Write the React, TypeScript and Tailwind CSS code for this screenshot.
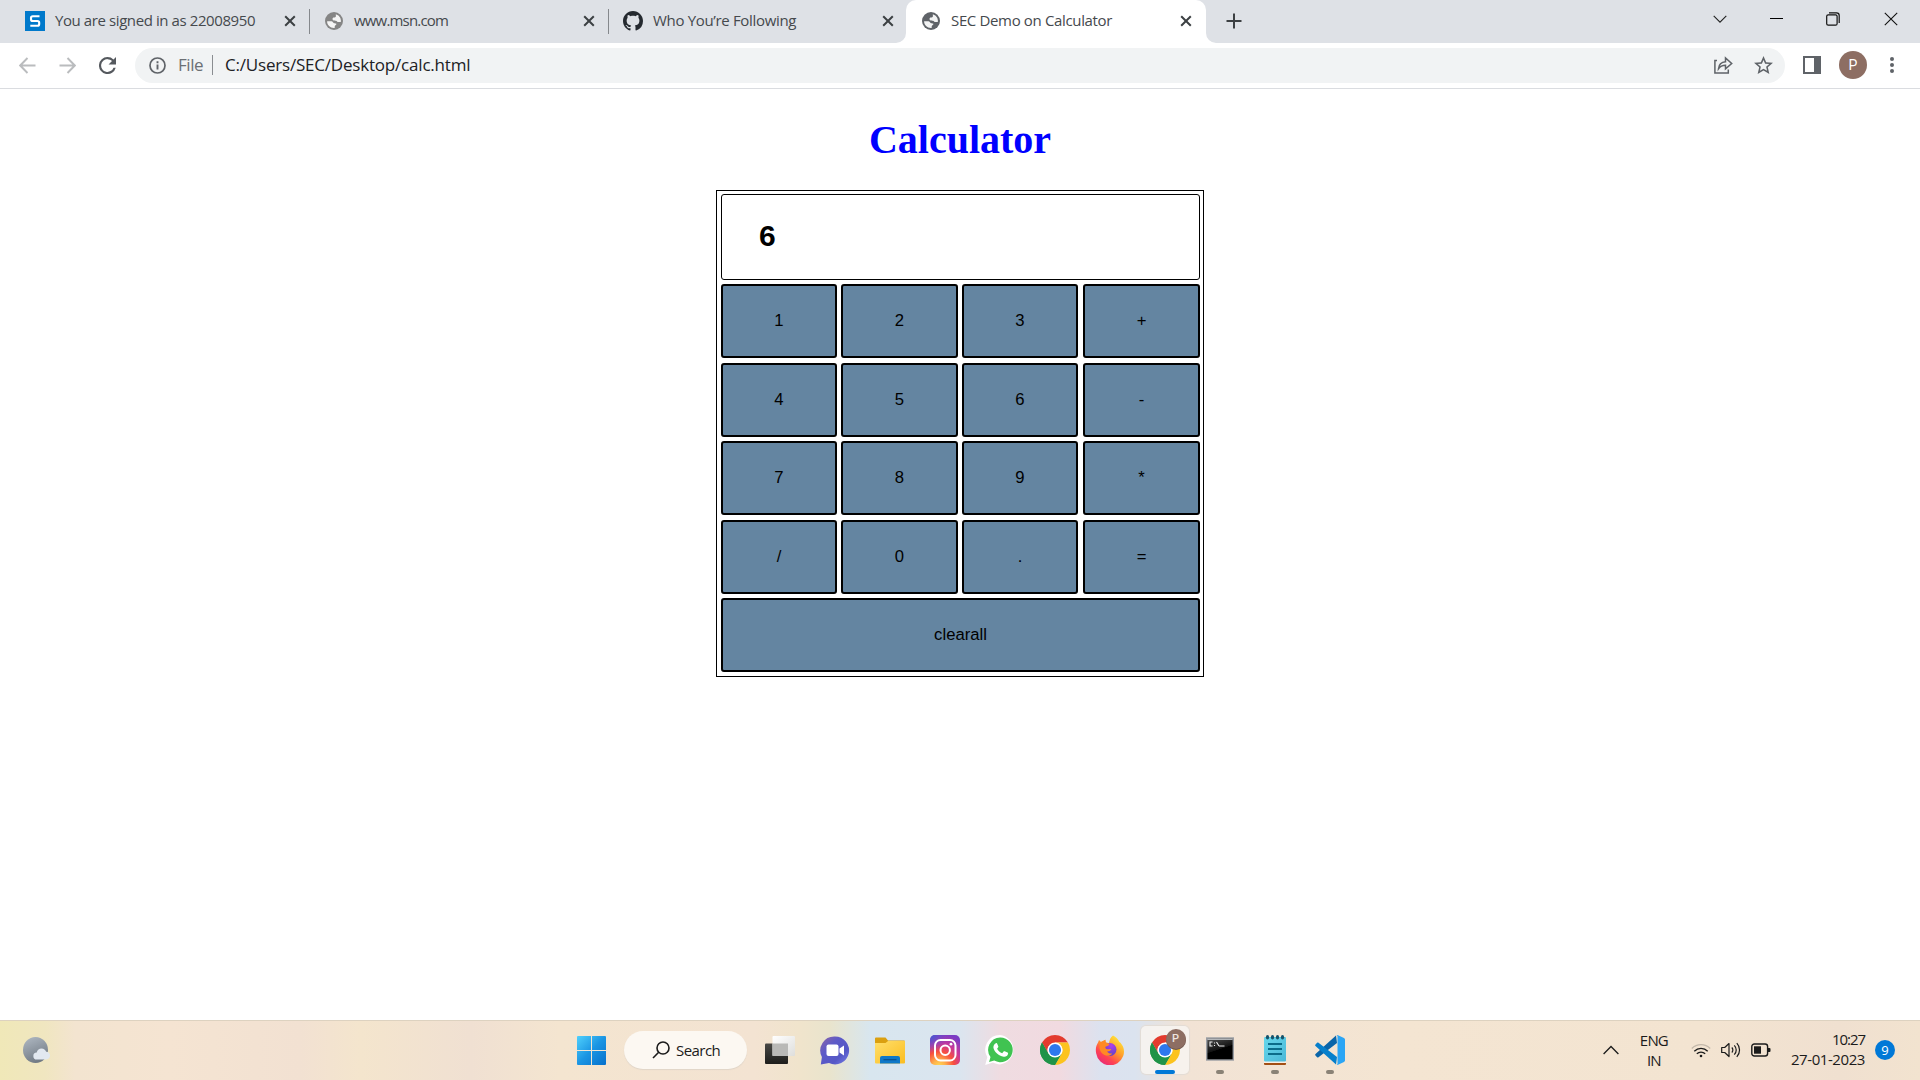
import type { ReactNode } from 'react';

const ui = 'font-["Open_Sans",sans-serif]';

function Globe({ className }: { className: string }) {
  return (
    <svg viewBox="0 0 18 18" className={`size-[18px] shrink-0 ${className}`}>
      <circle cx="9" cy="9" r="9" fill="currentColor" />
      <path
        d="M10.8 2.2c2.9.8 5.1 3.4 5.1 6.6 0 .5 0 .9-.2 1.3h-2.3c-1.2 0-1.5-1-2.4-1.3-.8-.3-2 .1-2.9-.5-.9-.6-.7-2.2.3-2.7.7-.3 1.700.200 2.200-.5.5-.7.2-1.900.200-2.900z"
        fill="#fff"
        opacity=".92"
      />
      <path
        d="M2.100 9.200h4.300c1.500 0 1.700 1.800 2.600 2 .9.200 2.200-.1 2.400.8.200 1-1.300 1.200-1.600 1.900-.2.600-.1 1.300-.1 2-4.200.4-7.600-2.600-7.600-6.700z"
        fill="#fff"
        opacity=".92"
      />
    </svg>
  );
}

function GitHub() {
  return (
    <svg viewBox="0 0 16 16" className="size-5 shrink-0" fill="#24292f">
      <path d="M8 0C3.58 0 0 3.58 0 8c0 3.54 2.29 6.53 5.47 7.59.4.07.55-.17.55-.38 0-.19-.01-.82-.01-1.49-2.01.37-2.53-.49-2.69-.94-.09-.23-.48-.94-.82-1.13-.28-.15-.68-.52-.01-.53.63-.01 1.08.58 1.23.82.72 1.21 1.87.87 2.33.66.07-.52.28-.87.51-1.07-1.78-.2-3.64-.89-3.64-3.95 0-.87.31-1.59.82-2.15-.08-.2-.36-1.02.08-2.12 0 0 .67-.21 2.2.82.64-.18 1.32-.27 2-.27s1.36.09 2 .27c1.53-1.04 2.2-.82 2.2-.82.44 1.1.16 1.92.08 2.12.51.56.82 1.27.82 2.15 0 3.07-1.87 3.75-3.65 3.95.29.25.54.73.54 1.48 0 1.07-.01 1.93-.01 2.2 0 .21.15.46.55.38A8.01 8.01 0 0 0 16 8c0-4.42-3.58-8-8-8z" />
    </svg>
  );
}

function TabClose() {
  return (
    <svg viewBox="0 0 12 12" className="ml-auto size-3 shrink-0" stroke="#3c4043" strokeWidth="2">
      <path d="M1.200 1.200l9.600 9.600M10.800 1.200L1.200 10.800" />
    </svg>
  );
}

function TabStrip() {
  return (
    <div className="flex h-[43px] bg-[#dee1e6] text-[15px] text-[#45494d]">
      <div className="flex h-[42px] w-[309px] items-center pr-[13px] pl-[25px]">
        <svg viewBox="0 0 20 20" className="size-5 shrink-0">
          <path d="M0 0h20v20H0z" fill="#0079cb" />
          <path d="M14.500 5.200H7.800Q6 5.200 6 7v1.200Q6 10 7.800 10h4.600q1.800 0 1.800 1.800v1.200q0 1.800-1.800 1.800H5.300" fill="none" stroke="#fff" strokeWidth="2.100" />
        </svg>
        <span className="ml-[10px] pb-[2px] tracking-[-0.41px] whitespace-nowrap">You are signed in as 22008950</span>
        <TabClose />
      </div>
      <div className="mt-[9px] h-[25px] w-px bg-[#85888c]" />
      <div className="flex h-[42px] w-[298px] items-center pr-[13px] pl-[15px]">
        <Globe className="text-[#858585]" />
        <span className="ml-[11px] pb-[2px] tracking-[-0.82px] whitespace-nowrap">www.msn.com</span>
        <TabClose />
      </div>
      <div className="mt-[9px] h-[25px] w-px bg-[#85888c]" />
      <div className="flex h-[42px] w-[297px] items-center pr-[12px] pl-[14px]">
        <GitHub />
        <span className="ml-[10px] pb-[2px] tracking-[-0.33px] whitespace-nowrap">Who You’re Following</span>
        <TabClose />
      </div>
      <div className="relative flex h-[43px] w-[300px] items-center rounded-t-[10px] bg-white pr-[14px] pb-px pl-4">
        <svg viewBox="0 0 10 10" className="absolute bottom-0 -left-[10px] size-[10px]" fill="#fff">
          <path d="M10 0v10H0A10 10 0 0 0 10 0z" />
        </svg>
        <svg viewBox="0 0 10 10" className="absolute -right-[10px] bottom-0 size-[10px]" fill="#fff">
          <path d="M0 0v10h10A10 10 0 0 1 0 0z" />
        </svg>
        <Globe className="text-[#5f6368]" />
        <span className="ml-[11px] pb-[2px] tracking-[-0.35px] whitespace-nowrap">SEC Demo on Calculator</span>
        <TabClose />
      </div>
      <svg viewBox="0 0 16 16" className="mt-[13px] ml-5 size-4" stroke="#3c4043" strokeWidth="2">
        <path d="M8 .5v15M.5 8h15" />
      </svg>
      <div className="ml-auto flex h-[37px] items-center pr-[22px] text-black">
        <svg viewBox="0 0 14 14" className="mr-[43px] size-[14px]" fill="none" stroke="#222" strokeWidth="1.100">
          <path d="M.7 3.800L7 10.100l6.300-6.300" />
        </svg>
        <div className="mr-[43px] h-px w-[13px] bg-black" />
        <svg viewBox="0 0 14 14" className="mr-11 size-[14px]" fill="none" stroke="#111" strokeWidth="1.200">
          <rect x=".7" y="2.800" width="10.400" height="10.400" rx="1.500" />
          <path d="M3 .8h7.500a2.700 2.700 0 0 1 2.700 2.700V11" />
        </svg>
        <svg viewBox="0 0 14 14" className="size-[14px]" stroke="#111" strokeWidth="1.100">
          <path d="M.8.8l12.400 12.400M13.200.8L.8 13.200" />
        </svg>
      </div>
    </div>
  );
}

function Toolbar() {
  return (
    <div className="flex h-[46px] items-center border-b border-[#dadce0] bg-white pb-px pl-[19px]">
      <svg viewBox="0 0 17 17" className="size-[17px]" fill="none" stroke="#babcbe" strokeWidth="1.900">
        <path d="M16.500 8.500H1.500M8.500 1L1.200 8.500l7.300 7.500" />
      </svg>
      <svg viewBox="0 0 17 17" className="ml-[23px] size-[17px]" fill="none" stroke="#babcbe" strokeWidth="1.900">
        <path d="M.5 8.500h15M8.500 1l7.300 7.500L8.500 16" />
      </svg>
      <svg viewBox="4 4 16 16" className="ml-[23px] size-[17px]" fill="#55595e">
        <path d="M17.650 6.350A7.958 7.958 0 0 0 12 4a8 8 0 1 0 7.730 10h-2.080A6 6 0 1 1 12 6c1.660 0 3.140.690 4.220 1.780L13 11h7V4l-2.350 2.350z" />
      </svg>
      <div className="ml-[19px] flex h-[35px] w-[1650px] items-center rounded-full bg-[#f1f3f4] pr-[12px] pl-[14px] text-[17px]">
        <svg viewBox="0 0 17 17" className="size-[17px]" fill="none" stroke="#5f6368" strokeWidth="1.700">
          <circle cx="8.500" cy="8.500" r="7.500" />
          <path d="M8.500 7.500v5M8.500 4.300v1.900" strokeWidth="1.900" />
        </svg>
        <span className="ml-3 tracking-[-0.47px] text-[#6b6f74]">File</span>
        <div className="ml-[9px] h-5 w-px bg-[#8a8d91]" />
        <span className="ml-[12px] tracking-[-0.2px] text-[#202124]">C:/Users/SEC/Desktop/calc.html</span>
        <svg viewBox="0 0 19 18" className="mr-[21px] ml-auto h-[18px] w-[19px]" fill="none" stroke="#5f6368" strokeWidth="1.500">
          <path d="M3 4.500H.9v12.600h13.400v-3.500" />
          <path d="M4.500 12.700c.4-4.400 2.900-6.600 7-6.900V2l6.200 5.500-6.200 5.300V9.300c-3.200 0-5.300 1-7 3.400z" />
        </svg>
        <svg viewBox="2 2 20 19" className="h-[18px] w-[19px]" fill="#5f6368">
          <path d="M22 9.240l-7.190-.62L12 2 9.190 8.630 2 9.240l5.460 4.730L5.820 21 12 17.270 18.180 21l-1.630-7.030L22 9.240zM12 15.400l-3.760 2.270 1-4.280-3.320-2.880 4.380-.38L12 6.100l1.710 4.040 4.380.380-3.320 2.880 1 4.280L12 15.400z" />
        </svg>
      </div>
      <div className="ml-[18px] h-[18px] w-[18px] border-2 border-r-[7px] border-[#5f6368]" />
      <div className='ml-[18px] flex size-7 items-center justify-center rounded-full bg-[#8d6e63] font-["Roboto",sans-serif] text-[14px] text-white'>P</div>
      <div className="ml-[23px] flex flex-col gap-[2px]">
        <div className="size-1 rounded-full bg-[#5f6368]" />
        <div className="size-1 rounded-full bg-[#5f6368]" />
        <div className="size-1 rounded-full bg-[#5f6368]" />
      </div>
    </div>
  );
}

const keyRows = [
  ['1', '2', '3', '+'],
  ['4', '5', '6', '-'],
  ['7', '8', '9', '*'],
  ['/', '0', '.', '='],
];
const rowGap = ['mt-[4px]', 'mt-[5px]', 'mt-[4px]', 'mt-[5px]'];
const keySize = ['w-[116px]', 'ml-[4px] w-[117px]', 'ml-[4px] w-[116px]', 'ml-[5px] w-[117px]'];

function Key({ className, children }: { className: string; children: ReactNode }) {
  return (
    <button className={`h-[74px] rounded-[3px] border-2 border-black bg-[#6485a1] leading-5 ${className}`}>
      {children}
    </button>
  );
}

function Calculator() {
  return (
    <main className="flex flex-1 flex-col items-center">
      <h1 className='mt-[28px] h-[46px] font-["Liberation_Serif",serif] text-[40px] leading-[46px] font-bold text-[#0000ff]'>
        Calculator
      </h1>
      <div className='mt-[27px] h-[487px] w-[488px] border border-black py-[3px] pr-[3px] pl-1 font-["Liberation_Sans",sans-serif] text-[16.67px] text-black'>
        <div className="flex h-[86px] items-center rounded-[3px] border border-black pb-[3px] pl-[37px] text-[30px] font-bold">6</div>
        {keyRows.map((row, r) => (
          <div key={r} className={`flex ${rowGap[r]}`}>
            {row.map((k, c) => (
              <Key key={k} className={keySize[c]}>{k}</Key>
            ))}
          </div>
        ))}
        <Key className="mt-[4px] w-[479px]">clearall</Key>
      </div>
    </main>
  );
}

function Slot({ children, running, active }: { children: ReactNode; running?: boolean; active?: boolean }) {
  return (
    <div className="flex w-[55px] justify-center">
      <div className={`relative flex size-12 items-center justify-center rounded-[5px] ${active ? 'bg-[#f7f3ef]/90 shadow-[0_0_1px_1px_#e3dcd5]' : ''}`}>
        {children}
        {running && <div className="absolute bottom-0 h-1 w-2 rounded-full bg-[#8a8276]" />}
        {active && <div className="absolute bottom-0 h-1 w-5 rounded-full bg-[#0078d7]" />}
      </div>
    </div>
  );
}

function WindowsLogo() {
  return (
    <svg viewBox="0 0 29 29" className="size-[29px]">
      <defs>
        <linearGradient id="win" x1="0" y1="0" x2="29" y2="29" gradientUnits="userSpaceOnUse">
          <stop stopColor="#4fd0fc" />
          <stop offset=".5" stopColor="#1b95e3" />
          <stop offset="1" stopColor="#0670cc" />
        </linearGradient>
      </defs>
      <path fill="url(#win)" d="M1 0h13v14H0V1q0-1 1-1zM15 0h13q1 0 1 1v13H15zM0 15h14v14H1q-1 0-1-1zM15 15h14v13q0 1-1 1H15z" />
    </svg>
  );
}

function TaskView() {
  return (
    <svg viewBox="0 0 30 28" className="h-7 w-[30px]">
      <defs>
        <linearGradient id="tvb" x1="0" y1="0" x2="0" y2="1"><stop stopColor="#484845" /><stop offset="1" stopColor="#1d1d1b" /></linearGradient>
        <linearGradient id="tvf" x1="0" y1="0" x2="1" y2="1"><stop stopColor="#fff" /><stop offset="1" stopColor="#dededc" /></linearGradient>
      </defs>
      <rect y="7.500" width="23" height="20.500" rx="1" fill="url(#tvb)" />
      <rect x="7.500" width="22.500" height="20" rx="1" fill="url(#tvf)" />
      <path d="M7.500 7.500H23V20H7.500z" fill="#b9b9b7" />
    </svg>
  );
}

function Chat() {
  return (
    <svg viewBox="0 0 30 29" className="h-[29px] w-[30px]">
      <defs>
        <linearGradient id="chat" x1="0" y1="0" x2="1" y2="1"><stop stopColor="#8e66a4" /><stop offset=".35" stopColor="#5d5ac8" /><stop offset=".7" stopColor="#5558c6" /><stop offset="1" stopColor="#7b83eb" /></linearGradient>
      </defs>
      <path d="M15 .5a14 14 0 1 1-6 26.600L.8 28.500 1.900 21A14 14 0 0 1 15 .5z" fill="url(#chat)" />
      <rect x="6.500" y="8.500" width="12" height="11.500" rx="2" fill="#fff" />
      <path d="M19.500 12.500l4.500-3v10l-4.500-3z" fill="#fff" />
    </svg>
  );
}

function Explorer() {
  return (
    <svg viewBox="0 0 30 27" className="h-[27px] w-[30px]">
      <defs>
        <linearGradient id="fold" x1="0" y1="0" x2="1" y2="1"><stop stopColor="#ffdf6b" /><stop offset="1" stopColor="#fbbd20" /></linearGradient>
      </defs>
      <path d="M0 1.500Q0 .5 1 .5h9.500l2.500 3h16q1 0 1 1V9H0z" fill="#dba010" />
      <path d="M0 6h10.500l2.500-2h17v21.500q0 1-1 1H1q-1 0-1-1z" fill="url(#fold)" />
      <path d="M5 26.500V21q0-2 2-2h16q2 0 2 2v5.500z" fill="#0f78c8" />
      <path d="M8.500 22.700h13" stroke="#0a4f8c" strokeWidth="1.200" />
    </svg>
  );
}

function Instagram() {
  return (
    <svg viewBox="0 0 30 30" className="size-[30px]">
      <defs>
        <radialGradient id="ig" cx=".3" cy="1.050" r="1.100">
          <stop stopColor="#ffdc55" /><stop offset=".2" stopColor="#ffb04a" /><stop offset=".45" stopColor="#f8503d" /><stop offset=".7" stopColor="#c8379b" /><stop offset="1" stopColor="#7a3bc4" />
        </radialGradient>
        <radialGradient id="ig2" cx="0" cy="0" r=".6"><stop stopColor="#3f5bd0" /><stop offset="1" stopColor="#5851db" stopOpacity="0" /></radialGradient>
      </defs>
      <rect width="30" height="30" rx="5" fill="url(#ig)" />
      <rect width="30" height="30" rx="5" fill="url(#ig2)" />
      <g fill="none" stroke="#fff" strokeWidth="2">
        <rect x="5" y="5" width="20.500" height="20.500" rx="5.500" />
        <circle cx="15.200" cy="15.200" r="4.700" />
      </g>
      <circle cx="21" cy="9.200" r="1.400" fill="#fff" />
    </svg>
  );
}

function WhatsApp() {
  return (
    <svg viewBox="0 0 30 30" className="size-[30px]">
      <path d="M15 0a15 14.800 0 0 1 0 29.400c-2.500 0-4.900-.6-7-1.800L.2 29.900l2.100-7.700A14.700 14.700 0 0 1 15 0z" fill="#fff" />
      <path d="M15.200 2.400a12.400 12.400 0 1 1-6 23.200l-5.100 1.300 1.400-4.900a12.400 12.400 0 0 1 9.700-19.600z" fill="#40c351" />
      <path d="M10.800 8.200c.8-.3 1.200-.1 1.500.7l1 2.400c.2.500 0 .9-.3 1.300l-.9 1.100c1.200 2.200 2.800 3.500 5.100 4.500l1.400-1.700c.3-.4.700-.4 1.100-.2l2.800 1.300c.7.300.7.700.5 1.500-.5 2-2.300 3-4.300 2.700-5.300-.9-9.800-5.200-10.300-9.300-.1-1.800.9-3.700 2.400-4.300z" fill="#fff" />
    </svg>
  );
}

function Chrome() {
  return (
    <svg viewBox="0 0 48 48" className="size-[30px]">
      <path d="M24 24L3.220 12A24 24 0 0 1 44.780 12L24 12z" fill="#e33b2e" />
      <path d="M3.220 12A24 24 0 0 0 24 48l10.400-18L24 24l-10.400 6z" fill="#1f9348" />
      <path d="M44.780 12A24 24 0 0 1 24 48l10.400-18A12 12 0 0 0 24 12z" fill="#fcc31e" />
      <path d="M3.220 12l10.400 18A12 12 0 0 1 24 12z" fill="#e33b2e" />
      <path d="M3.220 12A24 24 0 0 0 24 48l10.400-18a12 12 0 0 1-20.800 0z" fill="#1f9348" />
      <circle cx="24" cy="24" r="12" fill="#fff" />
      <circle cx="24" cy="24" r="9.700" fill="#2e78ed" />
    </svg>
  );
}

function Firefox() {
  return (
    <svg viewBox="0 0 30 30" className="size-[30px]">
      <defs>
        <linearGradient id="ffo" x1=".85" y1=".1" x2=".2" y2="1"><stop stopColor="#ffe53a" /><stop offset=".4" stopColor="#ff9a2a" /><stop offset=".7" stopColor="#ff4351" /><stop offset="1" stopColor="#e5267e" /></linearGradient>
        <radialGradient id="ffp" cx=".6" cy=".2" r=".9"><stop stopColor="#b23fe8" /><stop offset="1" stopColor="#5044c4" /></radialGradient>
      </defs>
      <path d="M18 .5c3 1.200 5.300 3.800 6.200 6.300 1.200.7 2 1.600 2.500 2.800 2.500 3 2.900 7.900 1.500 11.500A14 14 0 0 1 1.200 18.500C.2 13.700 1.300 10 3.200 7.200L4 5l2 2 4.500-2.300c-.3 1.300 0 2.200.5 2.800 1.200.1 2.100.2 3 .6.400-3 1.500-5.800 4-7.600z" fill="url(#ffo)" />
      <circle cx="15" cy="14.500" r="6.500" fill="url(#ffp)" />
      <path d="M3.200 8L6 7l4.500-2.300c-.2 1.400.2 2.300.8 3L14.500 9c-.3 1.800-2.300 2-3.700 2.500-.9.800-.4 2.300 1.200 2.700 1.600.4 3-.6 4.200.1-.8 1.800-2.500 2.300-4.200 2.200 1 1.600 3.200 2.500 5.300 1.900-2 2.800-6.500 3.100-9.300.7C4.500 16.300 4 12 5 10z" fill="#ff8a24" />
    </svg>
  );
}

function Terminal() {
  return (
    <svg viewBox="0 0 28 24" className="mb-[3px] h-6 w-7">
      <defs>
        <linearGradient id="cmd" x1="0" y1="0" x2=".4" y2="1"><stop stopColor="#555" /><stop offset=".6" stopColor="#111" /><stop offset=".61" stopColor="#000" /></linearGradient>
      </defs>
      <rect x=".7" y="1" width="26.600" height="22" fill="url(#cmd)" stroke="#9a9da3" strokeWidth="1.400" />
      <path d="M1.400 2.300h25.200" stroke="#d3d6da" />
      <path d="M6.500 5H4v4h2.500M8.500 5.500v1M8.500 8v1M10.500 5l2.500 4M13 9h5.500" fill="none" stroke="#eee" strokeWidth="1.100" />
    </svg>
  );
}

function Notepad() {
  return (
    <svg viewBox="0 0 22 30" className="h-[30px] w-[22px]">
      <defs>
        <linearGradient id="note" x1="0" y1="0" x2="1" y2="1"><stop stopColor="#68d8ec" /><stop offset="1" stopColor="#4bb8d8" /></linearGradient>
      </defs>
      <rect y="24" width="22" height="6" rx="1" fill="#a34f14" />
      <rect y="24" width="22" height="4" fill="#f5f0e8" />
      <rect y="2" width="22" height="24.500" rx="1" fill="url(#note)" />
      <path d="M4 9h14M4 14h14M4 19h14" stroke="#0b6c8a" strokeWidth="1.800" />
      <g fill="#15526a">
        <ellipse cx="3.500" cy="2.200" rx="1.600" ry="2.200" /><ellipse cx="8.500" cy="2.200" rx="1.600" ry="2.200" /><ellipse cx="13.500" cy="2.200" rx="1.600" ry="2.200" /><ellipse cx="18.500" cy="2.200" rx="1.600" ry="2.200" />
      </g>
    </svg>
  );
}

function VSCode() {
  return (
    <svg viewBox="0 0 30 30" className="size-[30px]">
      <path d="M22 8L3.500 22.200c-.5.400-1 .3-1.400 0L.5 20.600c-.5-.5-.5-1.200 0-1.700L21 .5z" fill="#0a65a9" />
      <path d="M22 22L3.500 7.800c-.5-.4-1-.3-1.400 0L.5 9.400c-.5.500-.5 1.200 0 1.700L21 29.500z" fill="#077fcb" />
      <path d="M21.500.3c.5-.3 1-.3 1.500 0l6 2.800c.6.300 1 .9 1 1.500v20.800c0 .6-.4 1.200-1 1.500l-6 2.800c-.5.300-1 .3-1.500 0 .5.300 1-.2 1-1V1.300c0-.8-.5-1.300-1-1z" fill="#2aa5f5" />
    </svg>
  );
}

function Taskbar() {
  return (
    <footer className="flex h-[60px] items-center border-t border-[#ddd2c0] bg-[linear-gradient(90deg,#f0e8b8_0,#f0e6c0_45px,#f3e4d0_75px,#f5e4d2_170px,#f2e1d2_300px,#f4e5cd_360px,#f0e0d2_470px,#f4e5d0_560px,#f3e3d2_755px,#f0e4cc_800px,#e9e4cd_830px,#d8e6ef_870px,#dbe5ef_960px,#efdce1_1000px,#f1dae0_1060px,#dce2ef_1100px,#dbe3ef_1135px,#f2e3d5_1185px,#f4e5d2_1400px,#f3e4d1_1700px,#f0e0d0_1840px,#f2e3cf_1920px)] pb-px">
      <div className="flex w-[564px] pl-[23px]">
        <svg viewBox="0 0 28 28" className="size-7">
          <defs>
            <linearGradient id="moon" x1=".2" y1="0" x2=".6" y2="1"><stop stopColor="#adb6c0" /><stop offset="1" stopColor="#6f7882" /></linearGradient>
          </defs>
          <ellipse cx="12.500" cy="14" rx="12.500" ry="13" fill="url(#moon)" />
          <path d="M14 23.500a3.500 3.500 0 0 1-.3-7c.6-2.500 2.600-4 4.800-4 2.300 0 4 1.300 4.700 3.300 2.300.1 3.800 1.700 3.800 3.800 0 2.300-1.500 3.900-3.800 3.900z" fill="#e2e8f0" />
        </svg>
      </div>
      <div className="flex w-[55px] justify-center"><WindowsLogo /></div>
      <div className={`ml-[5px] flex h-[38px] w-[123px] items-center rounded-full bg-[#fcf8f2] pl-7 text-[15px] text-[#1b1b1b] shadow-[0_1px_1px_#e0d5c8] ${ui}`}>
        <svg viewBox="0 0 18 18" className="size-[18px]" fill="none" stroke="#1b1b1b" strokeWidth="1.600">
          <circle cx="11" cy="7" r="6" />
          <path d="M6.700 11.300L1 17" />
        </svg>
        <span className="ml-[6px] tracking-[-0.55px]">Search</span>
      </div>
      <div className="ml-[5px] flex">
        <Slot><TaskView /></Slot>
        <Slot><Chat /></Slot>
        <Slot><Explorer /></Slot>
        <Slot><Instagram /></Slot>
        <Slot><WhatsApp /></Slot>
        <Slot><Chrome /></Slot>
        <Slot><Firefox /></Slot>
        <Slot active>
          <Chrome />
          <div className='absolute top-[3px] right-[3px] flex size-5 items-center justify-center rounded-full bg-[#8d6e63] font-["Roboto",sans-serif] text-[11px] font-medium text-[#eee4df] shadow-[0_1px_0_#6d554c]'>P</div>
        </Slot>
        <Slot running><Terminal /></Slot>
        <Slot running><Notepad /></Slot>
        <Slot running><VSCode /></Slot>
      </div>
      <div className={`ml-auto flex items-center pr-[25px] text-[15px] leading-5 text-[#1b1b1b] ${ui}`}>
        <svg viewBox="0 0 16 10" className="h-[10px] w-4" fill="none" stroke="#1b1b1b" strokeWidth="1.300">
          <path d="M.6 9L8 1.500 15.400 9" />
        </svg>
        <div className="ml-[18px] w-[34px] pb-px text-center tracking-[-0.8px]">
          <div>ENG</div>
          <div>IN</div>
        </div>
        <svg viewBox="0 0 20 15" className="ml-5 h-[15px] w-5" fill="none" stroke="#1b1b1b" strokeWidth="1.300">
          <path d="M.8 5.500a13 13 0 0 1 18.400 0" stroke="#c3b8aa" />
          <path d="M3.300 8.200a9.500 9.500 0 0 1 13.400 0M5.800 10.800a6 6 0 0 1 8.400 0" />
          <circle cx="10" cy="13" r="1.300" fill="#1b1b1b" stroke="none" />
        </svg>
        <svg viewBox="0 0 20 16" className="ml-[10px] h-4 w-5" fill="none" stroke="#1b1b1b" strokeWidth="1.200">
          <path d="M.7 5.500v5h3l4.300 4V1.500l-4.300 4z" strokeLinejoin="round" />
          <path d="M10.800 5.500a3.500 3.500 0 0 1 0 5M13.300 3.300a6.700 6.700 0 0 1 0 9.400M15.800 1.200a9.800 9.800 0 0 1 0 13.600" />
        </svg>
        <svg viewBox="0 0 20 14" className="ml-[10px] h-[14px] w-5" fill="none" stroke="#1b1b1b" strokeWidth="1.400">
          <rect x=".8" y="1" width="15.800" height="12" rx="2.500" />
          <rect x="3" y="3.300" width="7" height="7.400" fill="#1b1b1b" stroke="none" />
          <path d="M17 5h1.500q1 0 1 1v2q0 1-1 1H17z" fill="#1b1b1b" stroke="none" />
        </svg>
        <div className="ml-5 flex flex-col items-end pb-[3px]">
          <div className="tracking-[-1.05px]">10:27</div>
          <div className="tracking-[-0.42px]">27-01-2023</div>
        </div>
        <div className="ml-[10px] flex size-5 items-center justify-center rounded-full bg-[#0078d7] text-[13px] text-white">9</div>
      </div>
    </footer>
  );
}

export default function App() {
  return (
    <div className={`flex h-[1080px] w-[1920px] flex-col overflow-hidden bg-white ${ui}`}>
      <TabStrip />
      <Toolbar />
      <Calculator />
      <Taskbar />
    </div>
  );
}
